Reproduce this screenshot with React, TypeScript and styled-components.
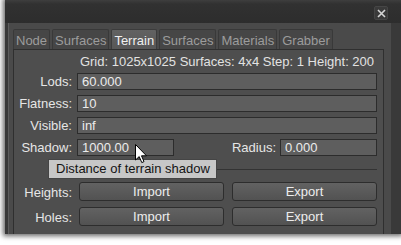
import React from "react";
import styled, { createGlobalStyle } from "styled-components";

const GlobalStyle = createGlobalStyle`
  html, body { margin: 0; padding: 0; background: #ffffff; overflow: hidden; }
  #root { width: 401px; height: 245px; overflow: hidden; }
  * { box-sizing: border-box; }
  body { font-family: "Liberation Sans", Arial, sans-serif; font-size: 13px; }
`;

const Page = styled.div`
  width: 401px;
  height: 245px;
  padding-left: 5px;
  overflow: hidden;
`;

const Window = styled.div`
  width: 396px;
  height: 234px;
  background: #393939;
  box-shadow: 0 0 5px 2px rgba(0, 0, 0, 0.6);
  display: flex;
  flex-direction: column;
  overflow: hidden;
`;

const TitleBar = styled.div`
  height: 23px;
  flex-shrink: 0;
  background: linear-gradient(#3e3e3e 0, #313131 4px, #2d2d2d 100%);
  display: flex;
  justify-content: flex-end;
  align-items: flex-start;
  padding: 6px 13px 0 0;
`;

const CloseButton = styled.div`
  width: 14px;
  height: 14px;
  background: #3a3a3a;
  border: 1px solid #464646;
  border-radius: 2px;
  display: flex;
  align-items: center;
  justify-content: center;
`;

const Frame = styled.div`
  flex: 1;
  margin: 0 10px 0 3px;
  background: #4a4a4a;
  border-left: 1px solid #5e5e5e;
  padding: 6px 7px 0 4px;
  display: flex;
  flex-direction: column;
  min-height: 0;
`;

const TabBar = styled.div`
  display: flex;
  gap: 2px;
  height: 20px;
  flex-shrink: 0;
`;

const Tab = styled.div<{ $active?: boolean }>`
  height: 20px;
  padding: 4px 2px 0;
  border: 1px solid ${(p) => (p.$active ? "#3c3c3c" : "#393939")};
  border-bottom: none;
  border-radius: 2px 2px 0 0;
  background: ${(p) =>
    p.$active ? "linear-gradient(#626262, #575757)" : "#464646"};
  color: ${(p) => (p.$active ? "#f0f0f0" : "#9c9c9c")};
  font-size: 13px;
  line-height: 14px;
  white-space: nowrap;
`;

const Panel = styled.div`
  flex: 1;
  position: relative;
  border: 1px solid #2f2f2f;
  border-bottom: none;
  background: #4e4e4e;
  padding: 5px 6px 0 5px;
`;

const Form = styled.div`
  display: grid;
  grid-template-columns: 53px 1fr;
  column-gap: 5px;
  row-gap: 5px;
  align-items: center;
`;

const Info = styled.div`
  grid-column: 2;
  height: 13px;
  line-height: 13px;
  text-align: center;
  color: #e2e2e2;
  white-space: nowrap;
`;

const Label = styled.div`
  grid-column: 1;
  text-align: right;
  color: #e6e6e6;
  line-height: 15px;
  white-space: nowrap;
`;

const InlineLabel = styled.div`
  color: #e6e6e6;
  line-height: 15px;
  white-space: nowrap;
`;

const Field = styled.div<{ $width?: number }>`
  height: 17px;
  width: ${(p) => (p.$width ? `${p.$width}px` : "auto")};
  border: 1px solid #2c2c2c;
  background: #5e5e5e;
  padding: 0 4px;
  line-height: 15px;
  color: #ececec;
  white-space: nowrap;
  overflow: hidden;
`;

const SplitRow = styled.div`
  display: flex;
  align-items: center;
  justify-content: space-between;
`;

const Group = styled.div`
  display: flex;
  align-items: center;
  gap: 4px;
`;

const Separator = styled.div`
  grid-column: 2;
  height: 1px;
  background: #333333;
  margin: 8px 0 7px;
`;

const ButtonPair = styled.div`
  display: flex;
  gap: 8px;
  padding-left: 2px;
  height: 20px;
  align-items: flex-start;
`;

const Button = styled.div`
  flex: 1;
  height: 19px;
  border: 1px solid #2d2d2d;
  border-radius: 3px;
  background: linear-gradient(#626262, #525252);
  color: #ededed;
  text-align: center;
  line-height: 17px;
`;

const Tooltip = styled.div`
  position: absolute;
  left: 34px;
  top: 109px;
  width: 169px;
  height: 20px;
  background: #c7c7c7;
  border: 1px solid #454545;
  color: #141414;
  padding-left: 7px;
  line-height: 18px;
  white-space: nowrap;
`;

const Cursor = styled.svg`
  position: absolute;
  left: 121px;
  top: 94px;
`;

const tabs = ["Node", "Surfaces", "Terrain", "Surfaces", "Materials", "Grabber"];

export default function App() {
  return (
    <>
      <GlobalStyle />
      <Page>
        <Window>
          <TitleBar>
            <CloseButton>
              <svg width="9" height="9" viewBox="0 0 9 9">
                <path d="M1 1 L8 8 M8 1 L1 8" stroke="#d6d6d6" strokeWidth="1.6" />
              </svg>
            </CloseButton>
          </TitleBar>
          <Frame>
            <TabBar>
              {tabs.map((t, i) => (
                <Tab key={i} $active={i === 2}>
                  {t}
                </Tab>
              ))}
            </TabBar>
            <Panel>
              <Form>
                <Info>Grid: 1025x1025 Surfaces: 4x4 Step: 1 Height: 200</Info>
                <Label>Lods:</Label>
                <Field>60.000</Field>
                <Label>Flatness:</Label>
                <Field>10</Field>
                <Label>Visible:</Label>
                <Field>inf</Field>
                <Label>Shadow:</Label>
                <SplitRow>
                  <Field $width={97}>1000.00</Field>
                  <Group>
                    <InlineLabel>Radius:</InlineLabel>
                    <Field $width={97}>0.000</Field>
                  </Group>
                </SplitRow>
                <Separator />
                <Label>Heights:</Label>
                <ButtonPair>
                  <Button>Import</Button>
                  <Button>Export</Button>
                </ButtonPair>
                <Label>Holes:</Label>
                <ButtonPair>
                  <Button>Import</Button>
                  <Button>Export</Button>
                </ButtonPair>
              </Form>
              <Tooltip>Distance of terrain shadow</Tooltip>
              <Cursor width="13" height="20" viewBox="0 0 13 20">
                <path
                  d="M0.5 0.5 L0.5 16 L4.2 12.6 L6.8 18.6 L9 17.6 L6.5 11.8 L11.5 11.8 Z"
                  fill="#ffffff"
                  stroke="#000000"
                  strokeWidth="1"
                  strokeLinejoin="round"
                />
              </Cursor>
            </Panel>
          </Frame>
        </Window>
      </Page>
    </>
  );
}
